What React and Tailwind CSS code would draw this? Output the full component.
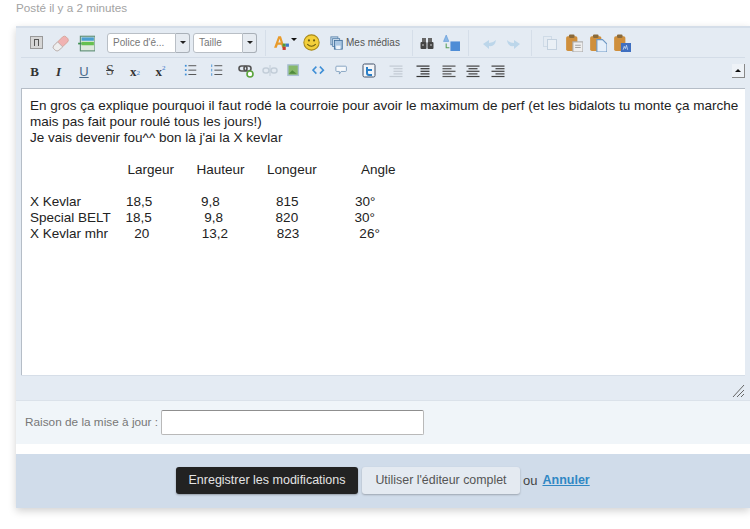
const FONT = { fontFamily: '"Liberation Sans", Arial, sans-serif' };
const SERIF = { fontFamily: '"Liberation Serif", serif' };

function Box({ className = "", children }) {
  return <div className={"flex shrink-0 items-center justify-center " + className}>{children}</div>;
}

function Icon({ children, size = 16 }) {
  return (
    <svg width={size} height={size} viewBox="0 0 16 16" fill="none">
      {children}
    </svg>
  );
}

function Sep({ className = "" }) {
  return <div className={"h-[26px] w-px shrink-0 bg-[#d5dee9] " + className} />;
}

// align: 0 left, 1 centre, 2 right
function Lines({ color = "#444", align = 0, indent = false }) {
  return (
    <Icon>
      {[0, 1, 2, 3, 4].map((i) => {
        const w = i % 2 ? 9 : 13;
        const x = indent ? (i === 0 || i === 4 ? 1.5 : 5.5) : align === 0 ? 1.5 : align === 1 ? 8 - w / 2 : 14.5 - w;
        const width = indent ? (i === 0 || i === 4 ? 13 : 9) : w;
        return <rect key={i} x={x} y={2.5 + i * 2.6} width={width} height="1.2" fill={color} />;
      })}
    </Icon>
  );
}

function Clip({ children }) {
  return (
    <Icon size={18}>
      <rect x="1" y="2" width="10" height="13" rx="1.5" fill="#cf8f3c" />
      <rect x="3.5" y="0.5" width="5" height="3" rx="1" fill="#8a6a3a" />
      {children}
    </Icon>
  );
}

function Select({ label, textW }) {
  return (
    <div className="flex h-[20px] shrink-0">
      <div className={"flex items-center rounded-l-[3px] border border-[#b9bfc6] bg-white pl-[5px] text-[10px] text-[#777] " + textW}>
        {label}
      </div>
      <div className="flex w-[14px] items-center justify-center rounded-r-[3px] border border-l-0 border-[#a9b0b8] bg-[#e6ebf1]">
        <span className="h-0 w-0 border-x-[3px] border-t-[3px] border-x-transparent border-t-[#222]" />
      </div>
    </div>
  );
}

function ToolbarTop() {
  return (
    <div className="flex h-[30px] items-center border-b border-[#d3dce7] pl-[3px]">
      <Box className="w-[24px]">
        <div className="flex h-[13px] w-[13px] items-center justify-center border border-[#999] bg-[#d6d6d6]">
          <span className="h-[7px] w-[5px] border border-b-0 border-[#555]" />
        </div>
      </Box>
      <Box className="w-[25px]">
        <Icon size={18}>
          <path d="M1.5 10.5 9.5 2.5q1.5-1.2 3 0l1.5 1.5q1.2 1.5 0 3L6 14.5q-1.5 1-3 0l-1.5-1.5q-1-1.2 0-2.5Z" fill="#f0b2b2" stroke="#c98" strokeWidth="0.6" />
          <path d="M1.5 10.5 5 7l4.5 4.5L6 14.5q-1.5 1-3 0l-1.5-1.5q-1-1.2 0-2.5Z" fill="#eee" stroke="#aaa" strokeWidth="0.6" />
        </Icon>
      </Box>
      <Box className="w-[25px]">
        <Icon size={18}>
          <rect x="3" y="2" width="13" height="13" fill="#dfe9dc" stroke="#5f8f77" />
          <rect x="4" y="3" width="11" height="3" fill="#4b9fd0" />
          <rect x="4" y="7" width="11" height="3" fill="#66c04e" />
          <path d="M1 8.5h3" stroke="#3d8f50" strokeWidth="1.5" />
        </Icon>
      </Box>
      <Sep className="mx-[4px] opacity-0" />
      <Select label="Police d'é..." textW="w-[69px]" />
      <div className="w-[3px]" />
      <Select label="Taille" textW="w-[50px]" />
      <Sep className="ml-[8px]" />
      <Box className="ml-[7px] w-[24px]">
        <Icon size={17}>
          <path d="M1 13 5 2h2.5l3.5 11H8.6l-.8-3H4.5l-1 3ZM5 8h2.3L6.2 4.5Z" fill="#e89b2c" />
          <rect x="9" y="9" width="3" height="3" fill="#4f9a3c" />
          <rect x="12" y="9" width="3" height="3" fill="#3f78c8" />
          <rect x="9" y="12" width="3" height="3" fill="#c93a2e" />
        </Icon>
        <span className="ml-[1px] h-0 w-0 -translate-y-[3px] border-x-[3px] border-t-[3px] border-x-transparent border-t-[#111]" />
      </Box>
      <Box className="w-[29px]">
        <Icon size={17}>
          <circle cx="8" cy="8" r="7.2" fill="#f3cf3a" stroke="#a98a1c" />
          <circle cx="5.6" cy="6" r="1" fill="#6b5a10" />
          <circle cx="10.4" cy="6" r="1" fill="#6b5a10" />
          <path d="M4 9.5q4 4 8 0" stroke="#6b5a10" strokeWidth="1" />
        </Icon>
      </Box>
      <Box className="ml-[2px] w-[17px]">
        <Icon size={14}>
          <rect x="1" y="1" width="8" height="9" fill="#c5d9ec" stroke="#5c86ad" />
          <rect x="3" y="3" width="8" height="9" fill="#d7e5f2" stroke="#5c86ad" />
          <rect x="5" y="5" width="9" height="10" fill="#a9c6e2" stroke="#3f6d99" />
          <rect x="7" y="11" width="5" height="4" fill="#eef4fa" />
        </Icon>
      </Box>
      <span className="ml-[1px] w-[56px] shrink-0 whitespace-nowrap text-[10px] text-[#555]">Mes médias</span>
      <Sep className="ml-[10px]" />
      <Box className="ml-[2px] w-[24px]">
        <Icon>
          <rect x="1.5" y="7" width="6" height="7" rx="1" fill="#444" />
          <rect x="8.5" y="7" width="6" height="7" rx="1" fill="#444" />
          <rect x="3" y="3" width="4" height="4" fill="#666" />
          <rect x="9" y="3" width="4" height="4" fill="#666" />
          <path d="M3 10h2M11 10h2" stroke="#ccc" />
        </Icon>
      </Box>
      <Box className="w-[24px]">
        <Icon size={17}>
          <rect x="7" y="7" width="9" height="9" fill="#4f8dd6" />
          <path d="M3 1 0.5 7h5Z" fill="#8cb9e6" stroke="#4f8dd6" strokeWidth="0.5" />
          <path d="M3 9v4h3" stroke="#5aa05a" />
        </Icon>
      </Box>
      <Sep className="ml-[5px]" />
      <Box className="ml-[9px] w-[24px]">
        <Icon>
          <path d="M14 5q-1 7-7 6v3L1 9l6-4v3q4 0 7-3Z" fill="#bcd6ea" />
        </Icon>
      </Box>
      <Box className="w-[22px]">
        <Icon>
          <path d="M2 5q1 7 7 6v3l6-5-6-4v3q-4 0-7-3Z" fill="#bcd6ea" />
        </Icon>
      </Box>
      <Sep className="ml-[7px]" />
      <Box className="ml-[7px] w-[21px]">
        <Icon>
          <rect x="1.5" y="1.5" width="8" height="10" fill="none" stroke="#cfdbe7" />
          <rect x="5.5" y="4.5" width="9" height="10" fill="#eaf0f6" stroke="#c3d1df" />
        </Icon>
      </Box>
      <Box className="ml-[1px] w-[25px]">
        <Clip>
          <rect x="7" y="7" width="9" height="9" fill="#eee" stroke="#aaa" />
          <path d="M9 10h5M9 12h5" stroke="#999" strokeWidth="0.8" />
        </Clip>
      </Box>
      <Box className="w-[24px]">
        <Clip>
          <path d="M7 5h5l4 4v7H7Z" fill="#e5effa" stroke="#6d97c4" />
        </Clip>
      </Box>
      <Box className="w-[24px]">
        <Clip>
          <rect x="7" y="8" width="9" height="8" fill="#3f6fc0" />
          <path d="M9 14l1-3 1 2 1-3 1 4" stroke="#cfe0f5" strokeWidth="0.7" />
        </Clip>
      </Box>
    </div>
  );
}

function ToolbarBottom() {
  const letter = "flex shrink-0 items-center justify-center leading-none";
  return (
    <div className="flex h-[30px] items-center pb-[4px] pl-[1px]">
      <span className={letter + " w-[25px] text-[13px] font-bold text-[#333]"} style={SERIF}>B</span>
      <span className={letter + " w-[23px] text-[13px] font-bold italic text-[#333]"} style={SERIF}>I</span>
      <span className={letter + " w-[28px] text-[13px] text-[#4a6a8a] underline"}>U</span>
      <span className={letter + " w-[24px] text-[14px] text-[#444] line-through"} style={SERIF}>S</span>
      <span className={letter + " w-[26px] text-[13px] font-bold text-[#333]"} style={SERIF}>
        x<sub className="text-[7px] font-normal text-[#3a78c8]">2</sub>
      </span>
      <span className={letter + " w-[25px] text-[13px] font-bold text-[#333]"} style={SERIF}>
        x<sup className="text-[7px] font-normal text-[#3a78c8]">2</sup>
      </span>
      <Box className="ml-[5px] w-[26px]">
        <Icon size={14}>
          {[2, 7, 12].map((y) => (
            <g key={y}>
              <rect x="1" y={y - 1} width="2" height="2" fill="#3f8fd6" />
              <rect x="5" y={y - 0.5} width="9" height="1" fill="#444" />
            </g>
          ))}
        </Icon>
      </Box>
      <Box className="w-[26px]">
        <Icon size={14}>
          {[2, 7, 12].map((y) => (
            <g key={y}>
              <rect x="1.5" y={y - 1.5} width="1" height="3" fill="#3f8fd6" />
              <rect x="5" y={y - 0.5} width="9" height="1" fill="#444" />
            </g>
          ))}
        </Icon>
      </Box>
      <Box className="ml-[3px] w-[26px]">
        <Icon>
          <rect x="1" y="3" width="8" height="5" rx="2.5" fill="none" stroke="#555" strokeWidth="1.6" />
          <rect x="6" y="3" width="7" height="5" rx="2.5" fill="none" stroke="#555" strokeWidth="1.6" />
          <circle cx="12" cy="11" r="3" fill="#fff" stroke="#5aa53c" strokeWidth="1.6" />
        </Icon>
      </Box>
      <Box className="w-[22px]">
        <Icon>
          <rect x="1" y="5" width="6" height="5" rx="2.5" stroke="#c3ced9" strokeWidth="1.5" />
          <rect x="9" y="5" width="6" height="5" rx="2.5" stroke="#c3ced9" strokeWidth="1.5" />
          <path d="M8 2v11" stroke="#c3ced9" />
        </Icon>
      </Box>
      <Box className="w-[26px]">
        <Icon size={14}>
          <rect x="1" y="1" width="12" height="12" fill="#86b86a" stroke="#a9bfd4" strokeWidth="1.5" />
          <path d="M2 11l4-4 5 4Z" fill="#4f8a3c" />
        </Icon>
      </Box>
      <Box className="w-[23px]">
        <Icon size={14}>
          <path d="M5 3 1 7l4 4M9 3l4 4-4 4" stroke="#3f8fd6" strokeWidth="1.8" />
        </Icon>
      </Box>
      <Box className="w-[24px]">
        <Icon size={14}>
          <path d="M2 2.5h10q1 0 1 1v4q0 1-1 1H7l-2 3v-3H2q-1 0-1-1v-4q0-1 1-1Z" fill="#f5f8fb" stroke="#7c9cbc" />
        </Icon>
      </Box>
      <Box className="w-[29px]">
        <Icon>
          <rect x="2" y="1" width="12" height="13" rx="1.5" fill="#f3f5f8" stroke="#44536a" />
          <path d="M6 4v6q0 2 2 2h3M6 7h5" stroke="#2a7fc7" strokeWidth="2" />
        </Icon>
      </Box>
      <Box className="w-[25px]">
        <Lines color="#c2cad3" indent />
      </Box>
      <Box className="ml-[2px] w-[26px]">
        <Lines color="#333" indent />
      </Box>
      <Box className="w-[25px]">
        <Lines color="#555" align={0} />
      </Box>
      <Box className="w-[24px]">
        <Lines color="#444" align={1} />
      </Box>
      <Box className="w-[25px]">
        <Lines color="#444" align={2} />
      </Box>
      <div className="flex-1" />
      <div className="flex h-[14px] w-[13px] items-center justify-center border-b border-r border-[#888] bg-[#eef2f7]">
        <span className="h-0 w-0 border-x-[3px] border-b-[3px] border-x-transparent border-b-[#111]" />
      </div>
    </div>
  );
}

const BODY = `En gros ça explique pourquoi il faut rodé la courroie pour avoir le maximum de perf (et les bidalots tu monte ça marche mais pas fait pour roulé tous les jours!)
Je vais devenir fou^^ bon là j'ai la X kevlar

                          Largeur      Hauteur      Longeur            Angle

X Kevlar            18,5             9,8               815               30°
Special BELT    18,5              9,8              820               30°
X Kevlar mhr       20              13,2             823                26°`;

export default function App() {
  return (
    <div className="h-[529px] w-[750px] overflow-hidden bg-white" style={FONT}>
      <div className="h-[26px] pl-[16px] pt-[1px] text-[11.7px] leading-[14px] text-[#a3a3a3]">Posté il y a 2 minutes</div>
      <div className="ml-[16px] w-[734px] shadow-[0_3px_8px_rgba(0,0,0,0.18)]">
        <div className="border-t-2 border-[#d5dee9] bg-[#e4ebf3] pl-[5px] pr-[5px]">
          <ToolbarTop />
          <ToolbarBottom />
          <div className="h-[287px] whitespace-pre-wrap border-l border-t border-[#b5bdc7] bg-white pl-[8px] pr-[3px] pt-[9px] text-[13.5px] leading-[16px] text-[#222]">
            {BODY}
          </div>
          <div className="flex h-[25px] items-end justify-end border-t border-[#d6dee8]">
            <svg width="14" height="14" viewBox="0 0 14 14" className="mb-[2px]">
              <path d="M13 1 2 13M13 6 6 13M13 10l-3 3" stroke="#666" strokeWidth="1" />
            </svg>
          </div>
        </div>
        <div className="flex h-[44px] items-center border-t border-[#dbe2ea] bg-[#f0f5f9] pl-[9px]">
          <span className="text-[11.8px] text-[#777]">Raison de la mise à jour :</span>
          <div className="ml-[3px] h-[25px] w-[263px] rounded-[2px] border border-[#b9b9b9] border-t-[#8f8f8f] bg-white" />
        </div>
        <div className="h-[10px] bg-white" />
        <div className="flex h-[54px] items-center bg-[#d0dcea] pb-[1px] pl-[160px]">
          <div className="flex h-[27px] w-[182px] items-center justify-center rounded-[3px] bg-[#222222] text-[12.5px] text-[#e4e4e4] shadow-[0_1px_2px_rgba(0,0,0,0.3)]">
            Enregistrer les modifications
          </div>
          <div className="ml-[4px] flex h-[27px] w-[158px] items-center justify-center rounded-[3px] bg-[#e4eaf1] text-[12.4px] text-[#555] shadow-[0_1px_2px_rgba(0,0,0,0.25)]">
            Utiliser l'éditeur complet
          </div>
          <span className="ml-[3px] text-[13px] text-[#444]">ou</span>
          <span className="ml-[5px] text-[12.5px] font-bold text-[#2f87c4] underline">Annuler</span>
        </div>
      </div>
    </div>
  );
}
